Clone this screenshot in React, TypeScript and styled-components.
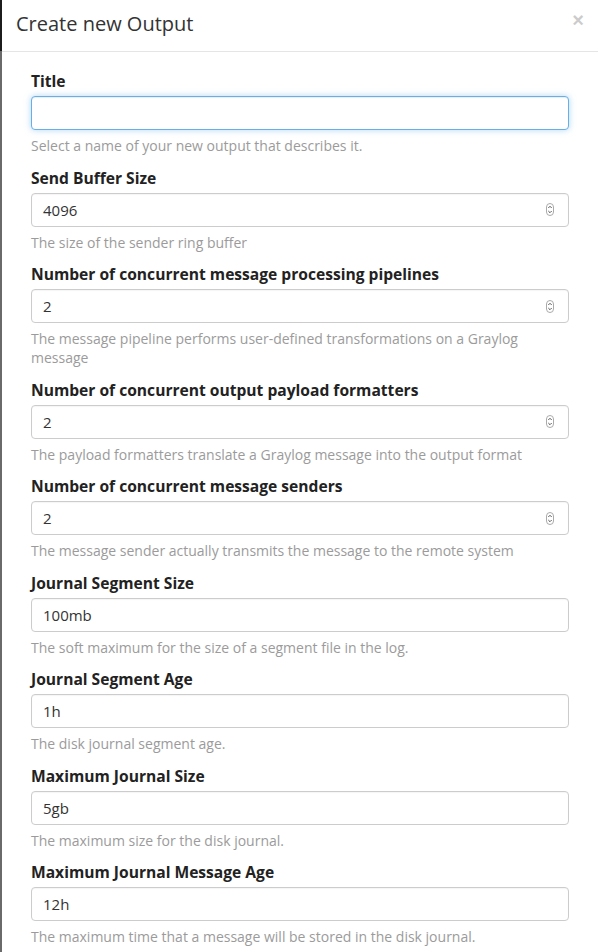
import React from 'react';
import styled, { createGlobalStyle } from 'styled-components';

const GlobalStyle = createGlobalStyle`
    html, body {
        margin: 0;
        padding: 0;
        background: #fff;
    }
    body {
        font-family: 'Open Sans', 'Liberation Sans', sans-serif;
        color: #333;
        -webkit-font-smoothing: antialiased;
    }
`;

const Modal = styled.div`
    width: 598px;
    min-height: 952px;
    background: #fff;
    border-left: 2px solid #6a6a6a;
    border-image: linear-gradient(to bottom, #1c1c1c 52px, #6a6a6a 52px) 1;
    box-sizing: border-box;
`;

const Header = styled.div`
    display: flex;
    align-items: center;
    justify-content: space-between;
    height: 52px;
    padding: 0 14px 0 14px;
    border-bottom: 1px solid #e5e5e5;
    box-sizing: border-box;
`;

const Title = styled.h4`
    margin: 0;
    font-size: 20px;
    font-weight: 400;
    color: #333;
    line-height: 1;
    padding-bottom: 4px;
`;

const Close = styled.button`
    border: 0;
    background: none;
    padding: 0;
    margin-top: -12px;
    font-family: 'Liberation Sans', sans-serif;
    font-size: 20px;
    font-weight: 700;
    line-height: 1;
    color: #000;
    opacity: 0.2;
    cursor: pointer;
`;

const Body = styled.form`
    display: flex;
    flex-direction: column;
    padding: 19px 29px 0 29px;
`;

const Group = styled.div`
    display: flex;
    flex-direction: column;
    margin-bottom: 12.5px;
`;

const Label = styled.label`
    font-size: 15.6px;
    font-weight: 700;
    line-height: 20px;
    margin-bottom: 5px;
    color: #222;
`;

const InputWrap = styled.div`
    position: relative;
`;

const Input = styled.input<{ $focused?: boolean }>`
    display: block;
    width: 100%;
    height: 34px;
    box-sizing: border-box;
    padding: 6px 11px;
    font-family: 'Open Sans', 'Liberation Sans', sans-serif;
    font-size: 15px;
    color: #333;
    background: #fff;
    border: 1px solid ${(p) => (p.$focused ? '#66afe9' : '#ccc')};
    border-radius: 4px;
    outline: none;
    box-shadow: ${(p) =>
        p.$focused
            ? 'inset 0 1px 1px rgba(0,0,0,.075), 0 0 6px rgba(102,175,233,.5)'
            : 'inset 0 1px 1px rgba(0,0,0,.04)'};
`;

const Spinner = styled.svg`
    position: absolute;
    right: 15px;
    top: 10.5px;
`;

const Help = styled.span`
    margin-top: 6px;
    font-size: 14px;
    line-height: 19px;
    color: #9b9b9b;
`;

type Field = {
    label: string;
    value: string;
    help: string;
    number?: boolean;
    focused?: boolean;
};

const fields: Field[] = [
    { label: 'Title', value: '', help: 'Select a name of your new output that describes it.', focused: true },
    { label: 'Send Buffer Size', value: '4096', help: 'The size of the sender ring buffer', number: true },
    {
        label: 'Number of concurrent message processing pipelines',
        value: '2',
        help: 'The message pipeline performs user-defined transformations on a Graylog message',
        number: true,
    },
    {
        label: 'Number of concurrent output payload formatters',
        value: '2',
        help: 'The payload formatters translate a Graylog message into the output format',
        number: true,
    },
    {
        label: 'Number of concurrent message senders',
        value: '2',
        help: 'The message sender actually transmits the message to the remote system',
        number: true,
    },
    { label: 'Journal Segment Size', value: '100mb', help: 'The soft maximum for the size of a segment file in the log.' },
    { label: 'Journal Segment Age', value: '1h', help: 'The disk journal segment age.' },
    { label: 'Maximum Journal Size', value: '5gb', help: 'The maximum size for the disk journal.' },
    { label: 'Maximum Journal Message Age', value: '12h', help: 'The maximum time that a message will be stored in the disk journal.' },
];

const NumberSpinner = () => (
    <Spinner width="8" height="13" viewBox="0 0 8 13">
        <rect x="0.5" y="0.5" width="7" height="12" rx="3.5" fill="#fff" stroke="#aaa" />
        <path d="M2.3 5 L4 3.3 L5.7 5" fill="none" stroke="#444" strokeWidth="0.9" />
        <path d="M2.3 8 L4 9.7 L5.7 8" fill="none" stroke="#444" strokeWidth="0.9" />
    </Spinner>
);

export default function App() {
    return (
        <>
            <GlobalStyle />
            <Modal>
                <Header>
                    <Title>Create new Output</Title>
                    <Close type="button">×</Close>
                </Header>
                <Body>
                    {fields.map((f) => (
                        <Group key={f.label}>
                            <Label>{f.label}</Label>
                            <InputWrap>
                                <Input type="text" defaultValue={f.value} $focused={f.focused} />
                                {f.number && <NumberSpinner />}
                            </InputWrap>
                            <Help>{f.help}</Help>
                        </Group>
                    ))}
                </Body>
            </Modal>
        </>
    );
}
